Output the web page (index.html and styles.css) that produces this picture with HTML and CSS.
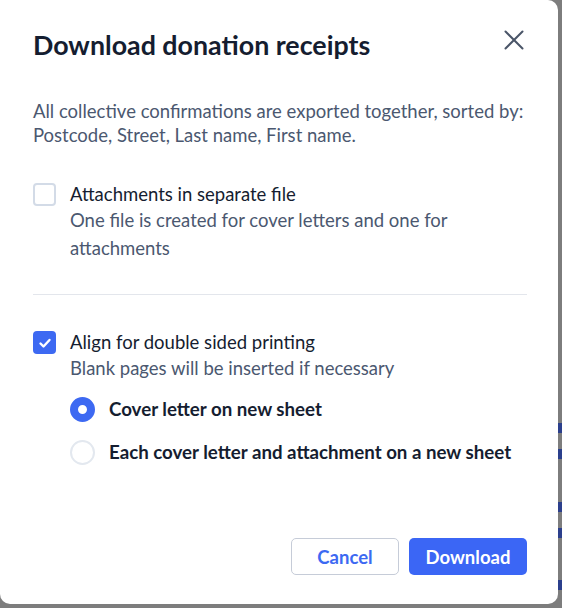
FILE: index.html
```html
<!DOCTYPE html>
<html lang="en">
<head>
    <meta charset="UTF-8">
    <meta name="viewport" content="width=device-width, initial-scale=1.0">
    <title>Download donation receipts</title>
    <link rel="stylesheet" href="styles.css">
</head>
<body>
    <div class="dialog">
        <div class="dialog-header">
            <h1>Download donation receipts</h1>
            <button class="close" aria-label="Close">
                <svg width="26" height="26" viewBox="0 0 26 26"><path d="M4.5 4.5L21.5 21.5M21.5 4.5L4.5 21.5" stroke="#4a5568" stroke-width="2" stroke-linecap="round"/></svg>
            </button>
        </div>

        <p class="intro">All collective confirmations are exported together, sorted by: Postcode, Street, Last name, First name.</p>

        <div class="option first">
            <span class="checkbox"></span>
            <div class="option-text">
                <div class="option-label">Attachments in separate file</div>
                <div class="option-desc">One file is created for cover letters and one for attachments</div>
            </div>
        </div>

        <hr class="divider">

        <div class="option">
            <span class="checkbox checked">
                <svg width="22" height="22" viewBox="0 0 22 22"><path d="M6.5 11.5l3 3L15.5 8" fill="none" stroke="#fff" stroke-width="2.4" stroke-linecap="round" stroke-linejoin="round"/></svg>
            </span>
            <div class="option-text">
                <div class="option-label">Align for double sided printing</div>
                <div class="option-desc">Blank pages will be inserted if necessary</div>

                <div class="radios">
                    <div class="radio-row">
                        <span class="radio selected"></span>
                        <span class="radio-label">Cover letter on new sheet</span>
                    </div>
                    <div class="radio-row">
                        <span class="radio"></span>
                        <span class="radio-label">Each cover letter and attachment on a new sheet</span>
                    </div>
                </div>
            </div>
        </div>

        <div class="dialog-footer">
            <button class="btn btn-secondary">Cancel</button>
            <button class="btn btn-primary">Download</button>
        </div>
    </div>
</body>
</html>
```

FILE: styles.css
```css
body {
    margin: 0;
    font-family: Lato, "Noto Sans", sans-serif;
    background-color: #7d7d7d;
    background-image:
        linear-gradient(#2b3f8c, #2b3f8c),
        linear-gradient(#2b3f8c, #2b3f8c),
        linear-gradient(#2b3f8c, #2b3f8c),
        linear-gradient(#2b3f8c, #2b3f8c),
        linear-gradient(#2b3f8c, #2b3f8c);
    background-repeat: no-repeat;
    background-size: 4px 10px;
    background-position: 558px 423px, 558px 449px, 558px 502px, 558px 528px, 558px 580px;
    height: 608px;
    overflow: hidden;
}
.dialog {
    box-sizing: border-box;
    width: 558px;
    height: 604px;
    background-color: #fff;
    border-radius: 0 10px 10px 10px;
    padding: 28px 31px 29px 33px;
    display: flex;
    flex-direction: column;
    color: #1a2233;
}
.dialog-header {
    display: flex;
    justify-content: space-between;
    align-items: center;
    height: 34px;
}
.dialog-header h1 {
    margin: 0;
    font-size: 26.8px;
    line-height: 34px;
    font-weight: 700;
    color: #151d30;
}
.close {
    border: none;
    background: none;
    padding: 0;
    width: 26px;
    height: 26px;
    margin-top: -10px;
    margin-right: 0;
    cursor: pointer;
}
.close svg {
    display: block;
}
.intro {
    margin: 37px 0 0;
    font-size: 18.5px;
    line-height: 24px;
    color: #4b5870;
}
.option {
    display: flex;
    align-items: flex-start;
    gap: 14px;
}
.option.first {
    margin-top: 35px;
}
.checkbox {
    flex: none;
    box-sizing: border-box;
    width: 23px;
    height: 23px;
    margin-top: 1px;
    border: 2px solid #d3dbe7;
    border-radius: 4px;
}
.checkbox.checked {
    border: none;
    background-color: #3d69f2;
}
.checkbox svg {
    display: block;
    margin: 0.5px;
}
.option-label {
    font-size: 18.5px;
    line-height: 24px;
    color: #151d30;
}
.option-desc {
    font-size: 18.5px;
    line-height: 28px;
    color: #4b5870;
}
.divider {
    border: none;
    border-top: 1px solid #e3e6ec;
    margin: 32px 0 35px;
}
.radios {
    margin-top: 14px;
    display: flex;
    flex-direction: column;
    gap: 17px;
}
.radio-row {
    display: flex;
    align-items: center;
    gap: 14px;
    height: 26px;
}
.radio {
    flex: none;
    box-sizing: border-box;
    width: 25px;
    height: 25px;
    border-radius: 50%;
    border: 2px solid #e3e8ef;
}
.radio.selected {
    border: 8.5px solid #3d69f2;
    background-color: #fff;
}
.radio-label {
    font-size: 18.7px;
    font-weight: 700;
    color: #151d30;
}
.dialog-footer {
    margin-top: auto;
    display: flex;
    justify-content: flex-end;
    gap: 10px;
}
.btn {
    height: 37px;
    border-radius: 5px;
    font-family: Lato, "Noto Sans", sans-serif;
    font-size: 18.5px;
    font-weight: 700;
    cursor: pointer;
}
.btn-secondary {
    width: 108px;
    background-color: #fff;
    border: 1px solid #c6ccd8;
    color: #3d69f2;
}
.btn-primary {
    width: 118px;
    background-color: #3b66f5;
    border: none;
    color: #fff;
}
```
